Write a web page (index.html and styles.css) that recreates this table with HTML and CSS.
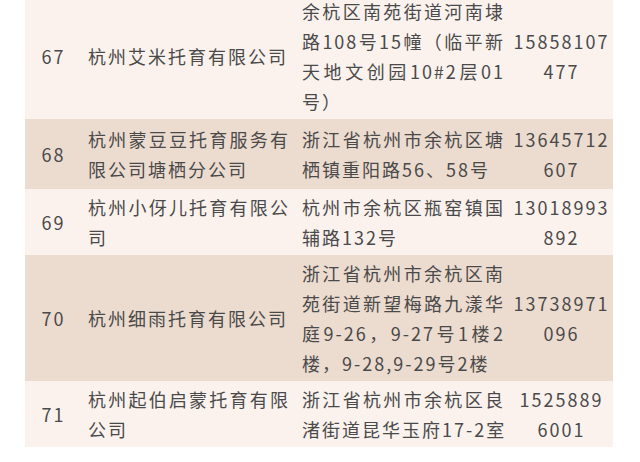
FILE: index.html
```html
<!DOCTYPE html>
<html lang="zh-CN">
<head>
<meta charset="utf-8">
<title>托育机构名单</title>
<link rel="stylesheet" href="styles.css">
</head>
<body>
<div class="scroll">
<table class="list">
  <colgroup>
    <col class="c-no">
    <col class="c-name">
    <col class="c-addr">
    <col class="c-tel">
  </colgroup>
  <tbody>
    <tr class="light">
      <td class="no">67</td>
      <td class="name"><div class="ln">杭州艾米托育有限公司</div></td>
      <td class="addr">
        <div class="ln j">余杭区南苑街道河南埭</div>
        <div class="ln j">路108号15幢（临平新</div>
        <div class="ln j">天地文创园10#2层01</div>
        <div class="ln">号）</div>
      </td>
      <td class="tel"><div class="ln">15858107</div><div class="ln">477</div></td>
    </tr>
    <tr class="dark tall">
      <td class="no">68</td>
      <td class="name"><div class="ln j">杭州蒙豆豆托育服务有</div><div class="ln">限公司塘栖分公司</div></td>
      <td class="addr">
        <div class="ln j">浙江省杭州市余杭区塘</div>
        <div class="ln">栖镇重阳路56、58号</div>
      </td>
      <td class="tel"><div class="ln">13645712</div><div class="ln">607</div></td>
    </tr>
    <tr class="light">
      <td class="no">69</td>
      <td class="name"><div class="ln j">杭州小伢儿托育有限公</div><div class="ln">司</div></td>
      <td class="addr">
        <div class="ln j">杭州市余杭区瓶窑镇国</div>
        <div class="ln">辅路132号</div>
      </td>
      <td class="tel"><div class="ln">13018993</div><div class="ln">892</div></td>
    </tr>
    <tr class="dark">
      <td class="no">70</td>
      <td class="name"><div class="ln">杭州细雨托育有限公司</div></td>
      <td class="addr">
        <div class="ln j">浙江省杭州市余杭区南</div>
        <div class="ln j">苑街道新望梅路九漾华</div>
        <div class="ln j">庭9-26，9-27号1楼2</div>
        <div class="ln">楼，9-28,9-29号2楼</div>
      </td>
      <td class="tel"><div class="ln">13738971</div><div class="ln">096</div></td>
    </tr>
    <tr class="light">
      <td class="no">71</td>
      <td class="name"><div class="ln j">杭州起伯启蒙托育有限</div><div class="ln">公司</div></td>
      <td class="addr">
        <div class="ln j">浙江省杭州市余杭区良</div>
        <div class="ln">渚街道昆华玉府17-2室</div>
      </td>
      <td class="tel"><div class="ln">1525889</div><div class="ln">6001</div></td>
    </tr>
  </tbody>
</table>
</div>
</body>
</html>
```

FILE: styles.css
```css
html, body {
  margin: 0;
  padding: 0;
  background: #ffffff;
}

body {
  font-family: "Noto Sans CJK SC", "Noto Sans", sans-serif;
  color: #4a4a4a;
  font-size: 18px;
  overflow: hidden;
}

.scroll {
  margin-top: -7px;
  padding-left: 25px;
}

.list {
  width: 588px;
  table-layout: fixed;
  border-collapse: collapse;
  border-spacing: 0;
}

.c-no { width: 55px; }
.c-name { width: 216px; }
.c-addr { width: 214px; }
.c-tel { width: 103px; }

.list td {
  padding-top: 3px;
  padding-bottom: 3px;
  vertical-align: middle;
  line-height: 30px;
  letter-spacing: 2px;
}

.list tr.tall td {
  padding-top: 5px;
  padding-bottom: 5px;
}

.light { background: #fbf2ee; }
.dark { background: #ecdbcf; }

.list td.no {
  text-align: center;
  padding-left: 2px;
  padding-right: 0;
}

.list td.name {
  padding-left: 8px;
  padding-right: 6px;
}

.list td.addr {
  padding-left: 6px;
  padding-right: 5px;
}

.list td.tel {
  text-align: center;
  padding-left: 0;
  padding-right: 0;
}

.ln {
  white-space: nowrap;
}

.j {
  text-align: justify;
  text-align-last: justify;
}
```
